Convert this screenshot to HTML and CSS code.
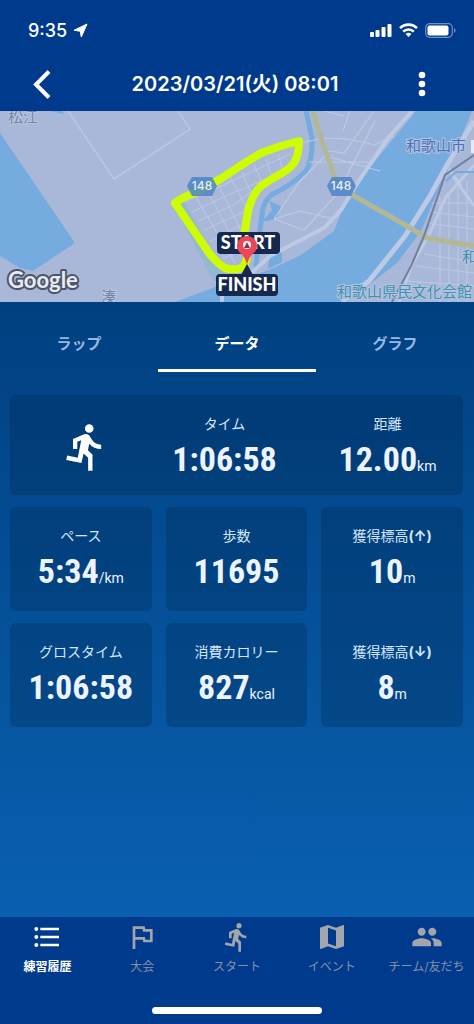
FILE: index.html
```html
<!DOCTYPE html>
<html lang="ja">
<head>
    <meta charset="UTF-8">
    <meta name="viewport" content="width=device-width, initial-scale=1.0">
    <title>練習履歴</title>
    <link rel="stylesheet" href="styles.css">
</head>
<body>
    <header class="header">
        <div class="status-bar">
            <div class="status-left">
                <span>9:35</span>
                <svg width="15" height="15" viewBox="0 0 15 15" fill="#fff" stroke="#fff" stroke-linejoin="round"><path d="M14 1 8.300 14 7.200 8.200 1 7.300z"/></svg>
            </div>
            <div class="status-right">
                <svg width="22" height="14" viewBox="0 0 22 14" fill="#fff"><rect x="0" y="9" width="4" height="5" rx="1"/><rect x="5.500" y="7" width="4" height="7" rx="1"/><rect x="11.500" y="4" width="4" height="10" rx="1"/><rect x="17.500" y="1" width="4" height="13" rx="1"/></svg>
                <svg width="19" height="14" viewBox="0 0 19 14" fill="none" stroke="#fff" stroke-width="2.600"><path d="M1 5.200a12 12 0 0 1 17 0M4.200 8.600a7.600 7.600 0 0 1 10.600 0"/><path d="M9.500 14 6.600 11a4 4 0 0 1 5.800 0z" fill="#fff" stroke="none"/></svg>
                <svg width="31" height="15" viewBox="0 0 31 15"><rect x=".7" y=".7" width="26.600" height="13.600" rx="4" fill="none" stroke="#6f90c4" stroke-width="1.200"/><rect x="2.500" y="2.500" width="21" height="10" rx="2" fill="#fff"/><path d="M29 5v5q1.500-.6 1.500-2.500T29 5z" fill="#6f90c4"/></svg>
            </div>
        </div>
        <div class="title-bar">
            <button class="icon-button" aria-label="戻る">
                <svg width="20" height="32" viewBox="0 0 20 32" fill="none" stroke="#fff" stroke-width="4"><path d="M17 3.500 4 16.500l13 13"/></svg>
            </button>
            <h1>2023/03/21(火) 08:01</h1>
            <button class="icon-button" aria-label="メニュー">
                <svg width="8" height="26" viewBox="0 0 8 26" fill="#fff"><circle cx="4" cy="4" r="3.300"/><circle cx="4" cy="13" r="3.300"/><circle cx="4" cy="22" r="3.300"/></svg>
            </button>
        </div>
    </header>

    <div class="map">
        <svg class="map-canvas" viewBox="0 0 474 191" preserveAspectRatio="xMidYMid slice">
            <rect width="474" height="191" fill="#a9b8d8"/>
            <!-- water -->
            <g fill="#76abdf">
                <path d="M0 22 75 132 33 160 20 157 0 145z"/>
                <path d="M50 0h12l2 3z"/>
                <path d="M175 191 213 177 224 172 254 164 267 160 301 144 334 120 347 87 370 56 394 27 416 0h56l-10 24-15 36-12 27-14 33-24 32-50 39z"/>
                <path d="M262 111l10-12-3-9 12 5-4 13-12 2zM270 140l12-1v12l-14 7z"/>
            </g>
            <path d="M175 96 214 171l10-8-40-72z" fill="#93b9d0"/>
            <path d="M306 0 312 27q1 22-6 33-14 14-35 24-9 9-9 20l-4 29-2 24" fill="none" stroke="#76abdf" stroke-width="5"/>
            <!-- streets -->
            <g fill="none" stroke="#bdcae5">
                <path d="M68 0 114 68 190 18 178 0" stroke-width="1.300"/>
                <path d="M300 32 319 28q25-3 55 6l20-9M374 0 344 42 322 39M309 51H370M343 20 350 0M375 10 338 82 304 119 274 108M274 108 300 70 325 45M274 108 300 100 330 107M326 45 380 60M344 5l-20-5" stroke-width="1.200"/>
                <path d="M412 0 388 27 360 68 341 99 324 117 270 145 248 165" stroke-width="4"/>
                <path d="M474 10 447 54 430 85 405 125 369 170 342 191" stroke-width="5"/>
                <path d="M474 54 446 86 428 126 412 153 399 191M452 64 474 95M449 58l12 17" stroke-width="3"/>
                <path d="M222 173v18" stroke-width="4"/>
            </g>
            <g fill="none" stroke="#bdcae5" stroke-width="1">
                <path d="M185 91 217 77 290 43M192 101 228 84 281 62M198 110 234 94 259 75M204 119 246 100M210 130 244 113M217 139 242 128M222 148 244 138M195 85 235 152M207 79 240 142M218 73 244 126M230 66 249 101M242 61 254 89M254 54 264 76M266 48 273 69M278 43 284 64"/>
                <path d="M440 86V191M449 81V191M458 76V191M467 70V191M431 101 474 106M427 112 474 118M424 143 474 151M416 155 474 162M407 170 474 175M432 92h42"/>
            </g>
            <path d="M474 61h-18l-10 9" fill="none" stroke="#76abdf" stroke-width="2"/>
            <!-- main road and railway -->
            <path d="M313 0 321 27 334 64 341 75 354 85 407 115 427 127 474 135" fill="none" stroke="#b3b894" stroke-width="5"/>
            <path d="M474 44 445 64 424 125 411 155 392 191" fill="none" stroke="#747f9d" stroke-width="2"/>
            <rect x="471" y="29" width="3" height="13" fill="#e5eaf5"/>
            <!-- running route -->
            <path d="M175 92Q184 85 200 80L222 67 240 55 261 42 281 35 299 30Q299 44 294 52 289 59 275 66L261 75Q252 84 248 100L244 125 247 145Q246 157 238 158H229Q222 158 209 142z" fill="none" stroke="#cdfc04" stroke-width="8" stroke-linejoin="round"/>
            <g class="road-number">
                <path d="M192 66h20l5 9-5 10h-20l-5-10z"/>
                <path d="M332 66h19l5 9-5 10h-19l-5-10z"/>
                <text x="202" y="79">148</text>
                <text x="341" y="79">148</text>
            </g>
            <g class="place">
                <text x="8" y="11" fill="#7785a3">松江</text>
                <text x="101" y="191" fill="#7785a3">湊</text>
                <text x="406" y="40" fill="#4d70bb">和歌山市</text>
                <text x="462" y="151" fill="#3f91ae">和歌山城</text>
                <text x="337" y="186" fill="#3f91ae">和歌山県民文化会館</text>
            </g>
            <text class="google" x="8" y="177">Google</text>
            <g class="flag-label">
                <path d="M247 153 253 164H241z"/>
                <rect x="217" y="121" width="63" height="22" rx="4"/>
                <rect x="216" y="163" width="62" height="22" rx="4"/>
                <text x="248" y="138">START</text>
                <text x="247" y="180">FINISH</text>
            </g>
            <path d="M247 153Q245 145 239 141A10 10 0 1 1 255 141Q249 145 247 153z" fill="#ee4656"/>
            <circle cx="247" cy="134" r="4" fill="#fff"/>
            <path d="M247 131l3 6h-6z" fill="#982d47"/>
        </svg>
    </div>

    <main class="content">
        <div class="tabs" role="tablist">
            <button class="tab" role="tab">ラップ</button>
            <button class="tab active" role="tab" aria-selected="true">データ</button>
            <button class="tab" role="tab">グラフ</button>
        </div>

        <div class="stats">
            <section class="card summary">
                <svg class="runner" viewBox="0 0 24 24"><path d="M13.490 5.480c1.100 0 2-.9 2-2s-.9-2-2-2-2 .9-2 2 .9 2 2 2zm-3.600 13.900 1-4.400 2.100 2v6h2v-7.500l-2.100-2 .6-3c1.300 1.500 3.300 2.500 5.500 2.500v-2c-1.900 0-3.500-1-4.300-2.400l-1-1.600c-.4-.6-1-1-1.700-1-.3 0-.5.1-.8.1l-5.200 2.200v4.700h2v-3.400l1.800-.7-1.600 8.100-4.900-1-.4 2 7 1.400z"/></svg>
                <div class="stat time">
                    <div class="label">タイム</div>
                    <div class="value">1:06:58</div>
                </div>
                <div class="stat">
                    <div class="label">距離</div>
                    <div class="value">12.00<span class="unit">km</span></div>
                </div>
            </section>
            <section class="card stat">
                <div class="label">ペース</div>
                <div class="value">5:34<span class="unit">/km</span></div>
            </section>
            <section class="card stat">
                <div class="label">歩数</div>
                <div class="value">11695</div>
            </section>
            <section class="card elevation">
                <div class="stat">
                    <div class="label">獲得標高<b>(↑)</b></div>
                    <div class="value">10<span class="unit">m</span></div>
                </div>
                <div class="stat">
                    <div class="label">獲得標高<b>(↓)</b></div>
                    <div class="value">8<span class="unit">m</span></div>
                </div>
            </section>
            <section class="card stat">
                <div class="label">グロスタイム</div>
                <div class="value">1:06:58</div>
            </section>
            <section class="card stat">
                <div class="label">消費カロリー</div>
                <div class="value">827<span class="unit">kcal</span></div>
            </section>
        </div>
    </main>

    <footer class="footer">
        <nav class="nav">
            <a href="#" class="nav-item active">
                <svg viewBox="0 0 24 24"><path d="M4 10.500a1.500 1.500 0 1 0 0 3 1.500 1.500 0 0 0 0-3zm0-6a1.500 1.500 0 1 0 0 3 1.500 1.500 0 0 0 0-3zm0 12a1.500 1.500 0 1 0 0 3 1.500 1.500 0 0 0 0-3zM7 19h14v-2H7v2zm0-6h14v-2H7v2zm0-8v2h14V5H7z"/></svg>
                練習履歴
            </a>
            <a href="#" class="nav-item">
                <svg viewBox="0 0 24 24"><path d="m12.360 6 .4 2H18v6h-3.360l-.4-2H7V6h5.360M14 4H5v17h2v-7h5.600l.4 2h7V6h-5.600L14 4z"/></svg>
                大会
            </a>
            <a href="#" class="nav-item">
                <svg viewBox="0 0 24 24"><path d="M13.490 5.480c1.100 0 2-.9 2-2s-.9-2-2-2-2 .9-2 2 .9 2 2 2zm-3.600 13.900 1-4.400 2.100 2v6h2v-7.500l-2.100-2 .6-3c1.300 1.500 3.300 2.500 5.500 2.500v-2c-1.900 0-3.500-1-4.300-2.400l-1-1.600c-.4-.6-1-1-1.700-1-.3 0-.5.1-.8.1l-5.200 2.200v4.700h2v-3.400l1.800-.7-1.600 8.100-4.900-1-.4 2 7 1.400z"/></svg>
                スタート
            </a>
            <a href="#" class="nav-item">
                <svg viewBox="0 0 24 24"><path d="m20.500 3-.16.030L15 5.100 9 3 3.360 4.900c-.21.070-.36.250-.36.480V20.500c0 .28.220.5.500.5l.16-.030L9 18.900l6 2.100 5.640-1.900c.21-.070.36-.25.36-.48V3.500c0-.28-.22-.5-.5-.5zM15 19l-6-2.110V5l6 2.110V19z"/></svg>
                イベント
            </a>
            <a href="#" class="nav-item">
                <svg viewBox="0 0 24 24"><path d="M16 11c1.660 0 2.990-1.340 2.990-3S17.660 5 16 5s-3 1.340-3 3 1.340 3 3 3zm-8 0c1.660 0 2.990-1.340 2.990-3S9.660 5 8 5 5 6.340 5 8s1.340 3 3 3zm0 2c-2.330 0-7 1.170-7 3.500V19h14v-2.500c0-2.330-4.670-3.500-7-3.500zm8 0c-.29 0-.62.020-.97.050 1.160.84 1.970 1.970 1.970 3.450V19h6v-2.500c0-2.330-4.670-3.500-7-3.500z"/></svg>
                チーム/友だち
            </a>
        </nav>
        <div class="home-indicator"></div>
    </footer>
</body>
</html>
```
FILE: styles.css
```css
* {
    box-sizing: border-box;
}
body {
    display: flex;
    flex-direction: column;
    min-height: 100vh;
    margin: 0;
    font-family: Inter, "Noto Sans CJK JP", sans-serif;
    color: #ffffff;
    background-color: #003a8c;
}
button {
    border: none;
    background: none;
    color: inherit;
    font-family: inherit;
    cursor: pointer;
}
.status-bar {
    display: flex;
    justify-content: space-between;
    align-items: center;
    height: 56px;
    padding: 4px 18px 0 28px;
}
.status-left {
    display: flex;
    align-items: center;
    gap: 6px;
    font-size: 18px;
    font-weight: 500;
}
.status-right {
    display: flex;
    align-items: center;
    gap: 7px;
}
.title-bar {
    display: flex;
    justify-content: space-between;
    align-items: center;
    height: 55px;
    padding: 0 48px 0 32px;
}
.title-bar h1 {
    margin: 0;
    font-size: 20px;
    font-weight: 600;
    line-height: 24px;
}
.icon-button {
    display: flex;
    justify-content: center;
    padding: 0;
}
.map-canvas {
    display: block;
    width: 100%;
    height: 191px;
}
.road-number {
    font-size: 12px;
    font-weight: 500;
    text-anchor: middle;
    fill: #4c83c9;
}
.road-number path {
    opacity: 0.85;
}
.road-number text {
    fill: #e8f1fa;
}
.place {
    font-size: 15px;
    stroke: #b5c5e2;
    stroke-width: 2px;
    paint-order: stroke;
}
.google {
    font-family: Lato, sans-serif;
    font-size: 22px;
    font-weight: 700;
    fill: #e8ebf2;
    stroke: #4c5569;
    stroke-width: 4px;
    stroke-linejoin: round;
    paint-order: stroke;
}
.flag-label {
    font-family: Lato, sans-serif;
    font-size: 18px;
    font-weight: 900;
    text-anchor: middle;
    fill: #16284f;
}
.flag-label text {
    fill: #ffffff;
}
.content {
    flex: 1;
    background: linear-gradient(#004080, #0960b0);
}
.tabs {
    display: grid;
    grid-template-columns: repeat(3, 1fr);
}
.tab {
    height: 70px;
    padding: 14px 0 0;
    border-bottom: 3px solid transparent;
    font-size: 15px;
    font-weight: 700;
    color: #94b8e3;
}
.tab.active {
    color: #ffffff;
    border-bottom-color: #ffffff;
}
.stats {
    display: grid;
    grid-template-columns: repeat(3, 1fr);
    gap: 12px 14px;
    padding: 23px 11px 12px 10px;
}
.card {
    border-radius: 6px;
    background-color: rgba(0, 40, 80, 0.3);
}
.summary {
    grid-column: 1 / -1;
    display: grid;
    grid-template-columns: repeat(3, 1fr);
    align-items: center;
    height: 100px;
}
.runner {
    width: 52px;
    height: 52px;
    justify-self: center;
    fill: #ffffff;
}
.stat {
    display: flex;
    flex-direction: column;
    align-items: center;
    justify-content: center;
    height: 104px;
    padding-top: 4px;
}
.time {
    padding-right: 24px;
}
.elevation {
    grid-row: span 2;
    display: flex;
    flex-direction: column;
    justify-content: space-between;
}
.label {
    font-size: 14px;
    line-height: 20px;
    color: #d5e6fa;
}
.value {
    font-family: "Roboto Condensed", Roboto, sans-serif;
    font-size: 34px;
    font-weight: 700;
    line-height: 50px;
    color: #edf3ff;
}
.unit {
    font-family: Roboto, sans-serif;
    font-size: 14px;
    font-weight: 400;
    line-height: 1;
}
.footer {
    height: 107px;
}
.nav {
    display: grid;
    grid-template-columns: repeat(5, 1fr);
    height: 90px;
    padding-top: 4px;
}
.nav-item {
    display: flex;
    flex-direction: column;
    align-items: center;
    font-size: 12px;
    line-height: 28px;
    white-space: nowrap;
    text-decoration: none;
    color: #8590a8;
}
.nav-item svg {
    width: 32px;
    height: 32px;
    fill: #a3a5ad;
}
.nav-item.active {
    font-weight: 700;
    color: #ffffff;
}
.nav-item.active svg {
    fill: #ffffff;
}
.home-indicator {
    width: 36%;
    height: 7px;
    margin: 0 auto;
    border-radius: 4px;
    background-color: #ffffff;
}
```
